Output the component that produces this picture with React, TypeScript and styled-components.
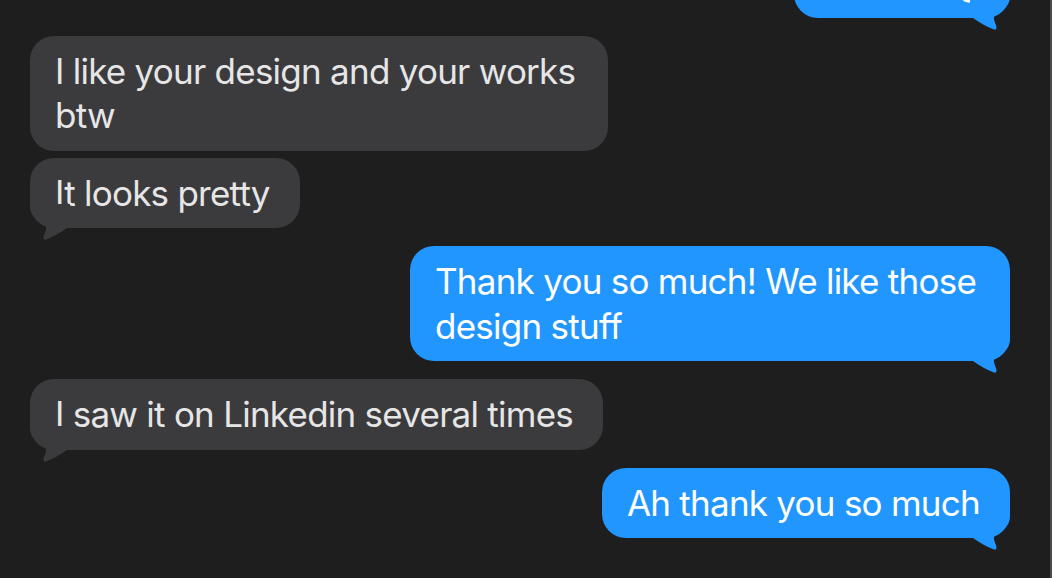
import React from "react";
import styled, { createGlobalStyle } from "styled-components";

const GlobalStyle = createGlobalStyle`
  html, body {
    margin: 0;
    padding: 0;
    background: #1e1e1e;
  }
  #root {
    height: 578px;
  }
`;

const Window = styled.div`
  height: 578px;
  box-sizing: border-box;
  overflow: hidden;
  background: #1e1e1e;
  border-right: 2px solid #4d4d4d;
  display: flex;
  flex-direction: column;
  justify-content: flex-end;
  padding: 0 40px 40px 30px;
  font-family: Inter, "Noto Sans", "Liberation Sans", sans-serif;
`;

const Thread = styled.div`
  display: flex;
  flex-direction: column;
`;

const Row = styled.div<{ $mine: boolean; $tail: boolean }>`
  display: flex;
  justify-content: ${(p) => (p.$mine ? "flex-end" : "flex-start")};
  margin-bottom: ${(p) => (p.$tail ? "18px" : "7px")};
  &:last-child {
    margin-bottom: 0;
  }
`;

const Bubble = styled.div<{ $mine: boolean }>`
  position: relative;
  box-sizing: border-box;
  max-width: ${(p) => (p.$mine ? "600px" : "578px")};
  padding: 13px 30px 13px 25px;
  border-radius: 24px;
  background: ${(p) => (p.$mine ? "#2196ff" : "#3b3b3d")};
  color: ${(p) => (p.$mine ? "#ffffff" : "#e6e6e6")};
  font-size: 35px;
  line-height: 44.5px;
  letter-spacing: -0.75px;
`;

const Tail = styled.svg<{ $mine: boolean }>`
  position: absolute;
  bottom: -12px;
  width: 40px;
  height: 36px;
  ${(p) => (p.$mine ? "right: 0;" : "left: 0; transform: scaleX(-1);")}
`;

type Msg = { text: string; mine: boolean; tail: boolean };

const messages: Msg[] = [
  { text: "Sure thing", mine: true, tail: true },
  { text: "I like your design and your works btw", mine: false, tail: false },
  { text: "It looks pretty", mine: false, tail: true },
  { text: "Thank you so much! We like those design stuff", mine: true, tail: true },
  { text: "I saw it on Linkedin several times", mine: false, tail: true },
  { text: "Ah thank you so much", mine: true, tail: true },
];

function BubbleTail({ mine }: { mine: boolean }) {
  return (
    <Tail $mine={mine} viewBox="0 0 40 36" aria-hidden="true">
      <path
        d="M0 0 H40 C40 5 39.4 8.5 37 11.5 C33 15 27.5 16.5 25 19.5 C23 22 24 27 26 31 C27 34 26.5 36.2 24 35.5 C17 33 9 28.5 3 24 H0 Z"
        fill={mine ? "#2196ff" : "#3b3b3d"}
      />
    </Tail>
  );
}

export default function App() {
  return (
    <>
      <GlobalStyle />
      <Window>
        <Thread>
          {messages.map((m, i) => (
            <Row key={i} $mine={m.mine} $tail={m.tail}>
              <Bubble $mine={m.mine}>
                {m.text}
                {m.tail && <BubbleTail mine={m.mine} />}
              </Bubble>
            </Row>
          ))}
        </Thread>
      </Window>
    </>
  );
}
